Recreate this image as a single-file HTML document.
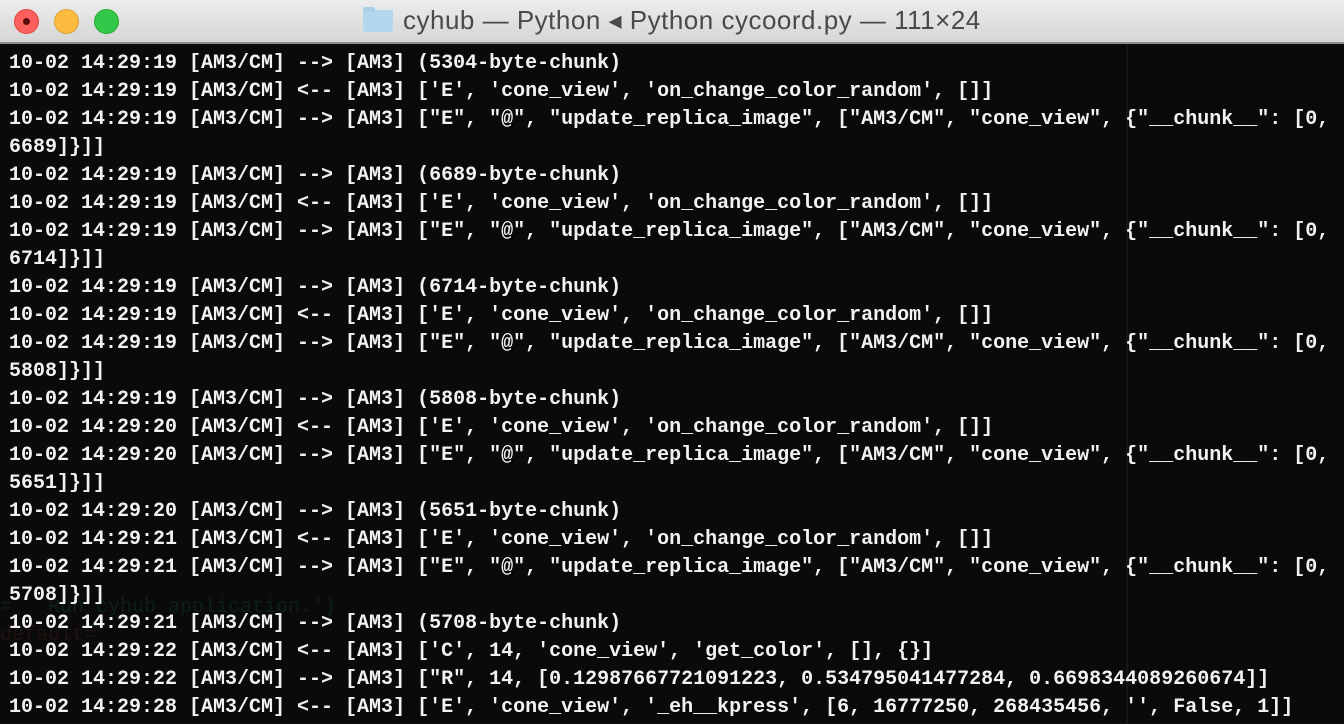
<!DOCTYPE html>
<html><head><meta charset="utf-8"><style>
html,body{margin:0;padding:0;width:1344px;height:724px;overflow:hidden;background:#0a0a0a}
.title{position:absolute;left:0;top:0;width:1344px;height:42px;background:linear-gradient(#ececec,#d6d6d6);border-bottom:2px solid #8e8e8e}
.btn{position:absolute;top:9px;width:23px;height:23px;border-radius:50%}
.t{position:absolute;left:403px;top:5px;font:26px "Liberation Sans",sans-serif;letter-spacing:0.5px;color:#4a4a4a;white-space:pre}
.folder{position:absolute;left:363px;top:10px;width:30px;height:22px;background:#b3d8ee;border-radius:2px}
.folder:before{content:"";position:absolute;left:0;top:-3px;width:12px;height:5px;background:#a6cfe8;border-radius:2px 2px 0 0}
pre{position:absolute;left:9px;top:50px;margin:0;font:bold 20px/28px "Liberation Mono",monospace;color:#f2f2f2;letter-spacing:0}
.ghost{position:absolute;font:20px/28px "Liberation Mono",monospace;white-space:pre;left:0}
</style></head><body>
<div class="title">
<div class="btn" style="left:14px;background:#fc605c;border:1px solid #de4a44"><div style="position:absolute;left:8px;top:8px;width:7px;height:7px;border-radius:50%;background:#5a0d0a"></div></div>
<div class="btn" style="left:54px;background:#fdbc40;border:1px solid #dea236"></div>
<div class="btn" style="left:94px;background:#34c84a;border:1px solid #27aa35"></div>
<div class="folder"></div>
<div class="t">cyhub — Python ◂ Python cycoord.py — 111×24</div>
</div>
<div style="position:absolute;left:1126px;top:44px;width:2px;height:680px;background:#161616"></div>
<div class="ghost" style="top:594px;color:#0c2019">=   Run cyhub application.')</div>
<div class="ghost" style="top:622px;color:#201210">default=</div>
<pre>10-02 14:29:19 [AM3/CM] --&gt; [AM3] (5304-byte-chunk)
10-02 14:29:19 [AM3/CM] &lt;-- [AM3] ['E', 'cone_view', 'on_change_color_random', []]
10-02 14:29:19 [AM3/CM] --&gt; [AM3] ["E", "@", "update_replica_image", ["AM3/CM", "cone_view", {"__chunk__": [0,
6689]}]]
10-02 14:29:19 [AM3/CM] --&gt; [AM3] (6689-byte-chunk)
10-02 14:29:19 [AM3/CM] &lt;-- [AM3] ['E', 'cone_view', 'on_change_color_random', []]
10-02 14:29:19 [AM3/CM] --&gt; [AM3] ["E", "@", "update_replica_image", ["AM3/CM", "cone_view", {"__chunk__": [0,
6714]}]]
10-02 14:29:19 [AM3/CM] --&gt; [AM3] (6714-byte-chunk)
10-02 14:29:19 [AM3/CM] &lt;-- [AM3] ['E', 'cone_view', 'on_change_color_random', []]
10-02 14:29:19 [AM3/CM] --&gt; [AM3] ["E", "@", "update_replica_image", ["AM3/CM", "cone_view", {"__chunk__": [0,
5808]}]]
10-02 14:29:19 [AM3/CM] --&gt; [AM3] (5808-byte-chunk)
10-02 14:29:20 [AM3/CM] &lt;-- [AM3] ['E', 'cone_view', 'on_change_color_random', []]
10-02 14:29:20 [AM3/CM] --&gt; [AM3] ["E", "@", "update_replica_image", ["AM3/CM", "cone_view", {"__chunk__": [0,
5651]}]]
10-02 14:29:20 [AM3/CM] --&gt; [AM3] (5651-byte-chunk)
10-02 14:29:21 [AM3/CM] &lt;-- [AM3] ['E', 'cone_view', 'on_change_color_random', []]
10-02 14:29:21 [AM3/CM] --&gt; [AM3] ["E", "@", "update_replica_image", ["AM3/CM", "cone_view", {"__chunk__": [0,
5708]}]]
10-02 14:29:21 [AM3/CM] --&gt; [AM3] (5708-byte-chunk)
10-02 14:29:22 [AM3/CM] &lt;-- [AM3] ['C', 14, 'cone_view', 'get_color', [], {}]
10-02 14:29:22 [AM3/CM] --&gt; [AM3] ["R", 14, [0.12987667721091223, 0.534795041477284, 0.6698344089260674]]
10-02 14:29:28 [AM3/CM] &lt;-- [AM3] ['E', 'cone_view', '_eh__kpress', [6, 16777250, 268435456, '', False, 1]]</pre>
</body></html>
